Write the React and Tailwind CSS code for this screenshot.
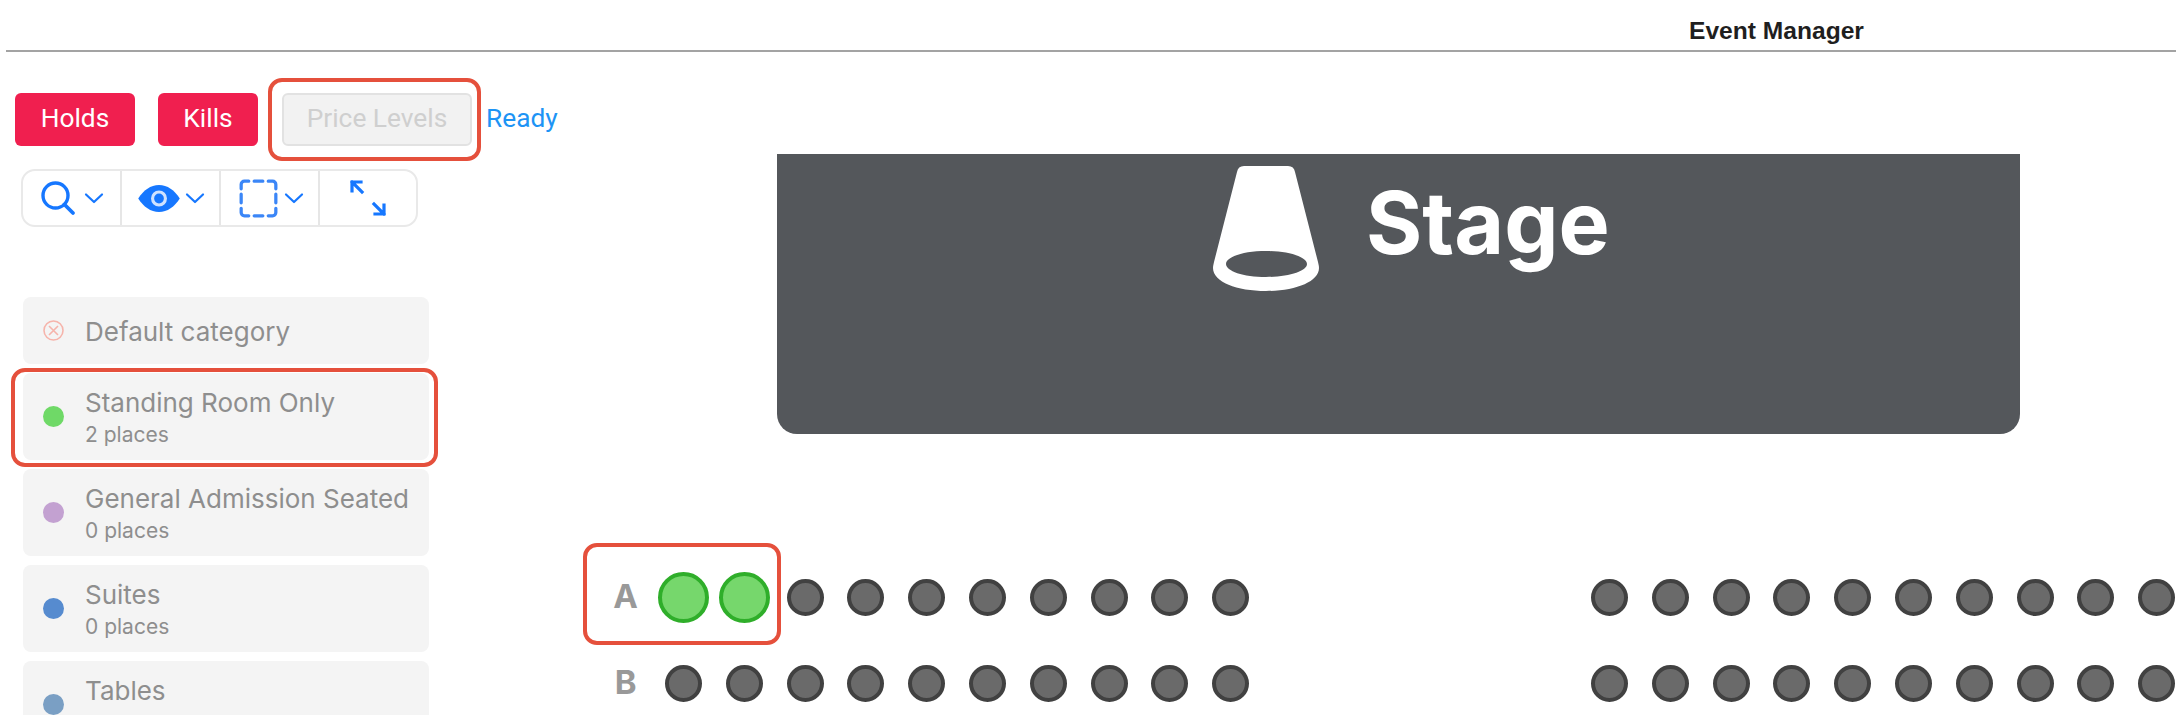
import React from "react";

const inter = { fontFamily: "Inter, sans-serif" };

function Chevron() {
  return (
    <svg width="20" height="12" viewBox="0 0 20 12" fill="none" stroke="#1677ff" strokeWidth="2.2" strokeLinecap="round" strokeLinejoin="round">
      <path d="M2 2.5l8 7.5 8-7.5" />
    </svg>
  );
}

function Seat({ green }) {
  return (
    <div className="w-[60.8px] flex justify-center items-center shrink-0">
      {green ? (
        <div className="w-[51px] h-[51px] rounded-full bg-[#76d76c] border-[4px] border-[#2fae2a]" />
      ) : (
        <div className="w-[37px] h-[37px] rounded-full bg-[#6a6a6a] border-[4px] border-[#414141]" />
      )}
    </div>
  );
}

function Row({ label, greens }) {
  return (
    <div className="flex items-center h-[86px]">
      <div className="w-[93.2px] shrink-0 pl-[50px] pr-[12px] flex justify-center font-bold text-[33px] text-[#999999]" style={inter}>
        {label}
      </div>
      {Array.from({ length: 10 }).map((_, i) => (
        <Seat key={i} green={i < greens} />
      ))}
      <div className="w-[318px] shrink-0" />
      {Array.from({ length: 10 }).map((_, i) => (
        <Seat key={i} />
      ))}
    </div>
  );
}

function Category({ dot, title, sub, icon, clipped }) {
  return (
    <div className={`flex items-center rounded-[8px] bg-[#f4f4f4] pl-[20px] ${sub || clipped ? "h-[87px]" : "h-[67px]"}`}>
      <div className="w-[42px] shrink-0">
        {icon ? (
          <svg width="21" height="21" viewBox="0 0 21 21" fill="none" stroke="#f6b4ab" strokeWidth="1.6">
            <circle cx="10.5" cy="10.5" r="9.5" />
            <path d="M6 6l9 9M15 6l-9 9" />
          </svg>
        ) : (
          <div className="w-[21px] h-[21px] rounded-full" style={{ backgroundColor: dot }} />
        )}
      </div>
      <div className="flex flex-col pt-[2px]" style={inter}>
        <div className="text-[26px] leading-[32px] text-[#8e8e8e] whitespace-nowrap">{title}</div>
        {sub && <div className="text-[21px] leading-[26px] mt-[3px] text-[#8e8e8e]">{sub}</div>}
        {clipped && <div className="h-[29px]" />}
      </div>
    </div>
  );
}

export default function App() {
  return (
    <div className="relative w-[2176px] h-[715px] overflow-hidden bg-white">
      <header className="ml-[6px] h-[52px] border-b-[2px] border-[#a3a3a3] pl-[1683px] pt-[17px]">
        <span className="font-bold text-[24.6px] leading-[28px] text-[#1f1f1f] block" style={{ fontFamily: '"Liberation Sans", sans-serif' }}>
          Event Manager
        </span>
      </header>

      <div className="flex">
        <aside className="w-[560px] shrink-0 pl-[15px] pt-[41px]">
          <div className="flex items-center" style={{ fontFamily: "Roboto, sans-serif" }}>
            <button className="w-[120px] h-[53px] pb-[2px] rounded-[6px] bg-[#f01f4f] text-white text-[26.3px]">Holds</button>
            <button className="ml-[23px] w-[100px] h-[53px] pb-[2px] rounded-[6px] bg-[#f01f4f] text-white text-[26.3px]">Kills</button>
            <button className="ml-[24px] w-[190px] h-[53px] pb-[2px] rounded-[6px] bg-[#f2f2f2] border-[2px] border-[#e2e2e2] text-[#cfcfcf] text-[26.3px]">Price Levels</button>
            <span className="ml-[14px] pb-[2px] text-[#1d94f5] text-[26.3px]">Ready</span>
          </div>

          <div className="mt-[23px] ml-[6px] w-[397px] h-[58px] flex rounded-[14px] border-[2px] border-[#e9e9e9]">
            <div className="w-[99px] flex items-center justify-center gap-[8px] border-r-[2px] border-[#e6e6e6]">
              <svg width="36" height="36" viewBox="0 0 36 36" fill="none" stroke="#1677ff" strokeWidth="3.4" strokeLinecap="round">
                <circle cx="15.5" cy="15.5" r="12.5" />
                <path d="M24.5 24.5l8.5 8.5" strokeWidth="3.8" />
              </svg>
              <Chevron />
            </div>
            <div className="w-[99px] flex items-center justify-center gap-[5px] pl-[2px] border-r-[2px] border-[#e6e6e6]">
              <svg width="42" height="27" viewBox="0 0 40 26">
                <path d="M0 13C5 5 12 0 20 0s15 5 20 13c-5 8-12 13-20 13S5 21 0 13z" fill="#1677ff" />
                <circle cx="20" cy="13" r="6.2" fill="none" stroke="#cfe2ff" strokeWidth="3" />
              </svg>
              <Chevron />
            </div>
            <div className="w-[99px] flex items-center justify-center gap-[6px] pl-[3px] border-r-[2px] border-[#e6e6e6]">
              <svg width="39" height="39" viewBox="0 0 36 36" fill="none" stroke="#3b86f7" strokeWidth="3" strokeLinecap="round" strokeLinejoin="round">
                <path d="M2 9V5a3 3 0 0 1 3-3h4M14 2h8M27 2h4a3 3 0 0 1 3 3v4M34 14v8M34 27v4a3 3 0 0 1-3 3h-4M22 34h-8M9 34H5a3 3 0 0 1-3-3v-4M2 22v-8" />
              </svg>
              <Chevron />
            </div>
            <div className="flex-1 flex items-center justify-center">
              <svg width="36" height="36" viewBox="0 0 36 36" fill="none" stroke="#1677ff" strokeWidth="3.2" strokeLinecap="square">
                <path d="M2 11V2h9M2 2l10 10" />
                <path d="M34 25v9h-9M34 34L24 24" />
              </svg>
            </div>
          </div>

          <div className="mt-[70px] ml-[8px] w-[406px] flex flex-col gap-[9px]">
            <Category icon title="Default category" />
            <Category dot="#6fd967" title="Standing Room Only" sub="2 places" />
            <Category dot="#c3a1d1" title="General Admission Seated" sub="0 places" />
            <Category dot="#568bcf" title="Suites" sub="0 places" />
            <Category dot="#7a9fc4" title="Tables" clipped />
          </div>
        </aside>

        <main className="flex-1 pt-[102px] min-w-0">
          <div className="ml-[217px] w-[1243px] h-[280px] bg-[#54575b] rounded-b-[20px] flex items-start pl-[436px] pt-[12px]">
            <svg width="106" height="125" viewBox="0 0 106 125" className="shrink-0">
              <path
                fillRule="evenodd"
                fill="#ffffff"
                d="M31 0H75Q81 0 82 6L105 96Q106 100 106 102C106 116 82 125 53 125C24 125 0 116 0 102Q0 100 1 96L24 6Q25 0 31 0ZM53 85C30 85 13 91 13 98C13 105 30 111 53 111C76 111 94 105 94 98C94 91 76 85 53 85Z"
              />
            </svg>
            <span className="ml-[47px] mt-[2px] font-bold text-[86px] leading-[110px] text-white" style={inter}>
              Stage
            </span>
          </div>
          <div className="mt-[120px]">
            <Row label="A" greens={2} />
            <Row label="B" greens={0} />
          </div>
        </main>
      </div>

      <div className="absolute left-[268px] top-[78px] w-[213px] h-[83px] rounded-[14px] border-[4px] border-[#e5503c]" />
      <div className="absolute left-[11px] top-[368px] w-[427px] h-[99px] rounded-[14px] border-[4px] border-[#e5503c]" />
      <div className="absolute left-[583px] top-[543px] w-[198px] h-[102px] rounded-[14px] border-[4px] border-[#e5503c]" />
    </div>
  );
}
